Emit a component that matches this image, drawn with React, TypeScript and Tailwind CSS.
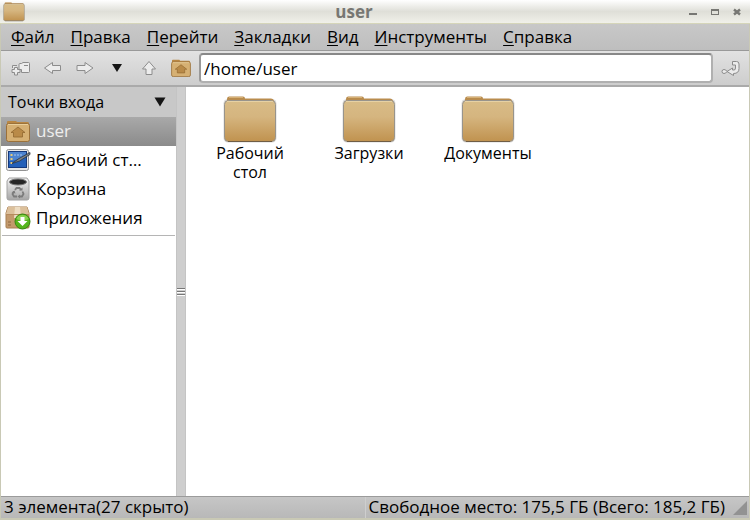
import { useState } from "react";

function Folder({ className }: { className: string }) {
  return (
    <svg viewBox="0 0 54 48" className={className} aria-hidden="true">
      <defs>
        <linearGradient id="folderFront" x1="0" y1="0" x2="0" y2="1">
          <stop offset="0" stopColor="#d8bc87" />
          <stop offset="0.4" stopColor="#d5b57f" />
          <stop offset="1" stopColor="#c0924f" />
        </linearGradient>
      </defs>
      <rect x="0.5" y="3" width="53" height="43.5" rx="4.5" fill="#888" opacity="0.3" />
      <path d="M4 7V3Q4 0.5 6 0.5H20Q22 0.5 22 2.5H48Q50 2.5 51 4.5V8H4Z" fill="#b98c4e" />
      <path d="M6 1.5H20" stroke="#d7b276" />
      <rect x="1.5" y="4.5" width="51" height="41" rx="4" fill="url(#folderFront)" stroke="#98948c" strokeWidth="1" />
      <path d="M4 5.5H50" stroke="#e6d1a4" />
      <path d="M5 45.5H49" stroke="#6f5d45" />
    </svg>
  );
}

function HomeFolder({ className }: { className: string }) {
  return (
    <svg viewBox="0 0 24 22" className={className} aria-hidden="true">
      <path d="M1 5V2Q1 1 2 1H10L11 2H22Q23 2 23 4V6H1Z" fill="#b98743" />
      <rect x="0.5" y="3.5" width="23" height="18" rx="2" fill="#d6b073" stroke="#9b713a" />
      <path d="M2 4.5H22" stroke="#e9cf9b" />
      <path d="M12 7L19 12.5H16.5V17H7.5V12.5H5Z" fill="#b98a48" stroke="#91672f" strokeWidth="0.8" />
    </svg>
  );
}

function DesktopIcon() {
  return (
    <svg viewBox="0 0 26 22" className="h-[22px] w-[26px] shrink-0" aria-hidden="true">
      <rect x="1.5" y="0.5" width="22" height="21" rx="2" fill="#e6e6e6" stroke="#929292" />
      <rect x="3.5" y="2.5" width="18" height="16" fill="#2460b8" stroke="#15397c" />
      <path d="M4 12Q13 12 21 5V3H4Z" fill="#4d84d0" />
      <path d="M5.5 5h2v2h-2zM5.5 9h2v2h-2zM5.5 13h2v2h-2z" fill="#e8c977" />
      <path d="M9 6H18" stroke="#a9c6ec" strokeDasharray="2 1" />
      <path d="M25 3.5L14 9.5L7 14.5L14.5 12L25 5.5Z" fill="#7c838a" stroke="#30363c" strokeWidth="0.8" />
    </svg>
  );
}

function TrashIcon() {
  return (
    <svg viewBox="0 0 26 24" className="h-6 w-[26px] shrink-0" aria-hidden="true">
      <defs>
        <linearGradient id="trashBody" x1="0" y1="0" x2="0" y2="1">
          <stop offset="0" stopColor="#f3f3f3" />
          <stop offset="1" stopColor="#a5a5a5" />
        </linearGradient>
      </defs>
      <path d="M4 1H22L24 4V21Q24 23 22 23H4Q2 23 2 21V4Z" fill="url(#trashBody)" stroke="#a2a2a2" />
      <ellipse cx="13" cy="5" rx="8.5" ry="3" fill="#262626" stroke="#777" />
      <g fill="none" stroke="#7b7b7b" strokeWidth="1.8">
        <path d="M10 13L11.5 11H14.5L16 13" />
        <path d="M17.5 14.5L18.5 17L17 19.5H14" />
        <path d="M12 19.5H9L7.5 17L9 14.5" />
      </g>
      <path d="M14 13.5H17.5V10.5ZM15 17.5V21.5L12.5 19.5ZM6.5 15.5L9.5 13.5L10.5 16.5Z" fill="#7b7b7b" />
    </svg>
  );
}

function PackageIcon() {
  return (
    <svg viewBox="0 0 26 24" className="h-6 w-[26px] shrink-0" aria-hidden="true">
      <path d="M3 1H22L24 7V21Q24 22 23 22H2Q1 22 1 21V7Z" fill="#c39a6c" stroke="#a77e51" />
      <path d="M3 1H22L24 8H1Z" fill="#dcc09b" />
      <path d="M10 1H15L16 12H9Z" fill="#eddcc2" />
      <path d="M2 8.5H23" stroke="#b58a5c" />
      <path d="M3 16H6M3 19H6" stroke="#8e693e" />
      <circle cx="17.5" cy="15.5" r="7.5" fill="#55b51c" stroke="#378510" />
      <path d="M11.5 13Q12.5 9 17.5 9Q22.5 9 23.5 13Q17.5 16 11.5 13Z" fill="#8bd351" />
      <path d="M15.5 11H19.5V15H22.5L17.5 20L12.5 15H15.5Z" fill="#fff" />
    </svg>
  );
}

function ToolIcon({ d }: { d: string }) {
  return (
    <svg viewBox="0 0 20 18" className="h-[18px] w-5" fill="#ececec" stroke="#8c8c8c" strokeWidth="1" strokeLinejoin="round" aria-hidden="true">
      <path d={d} />
    </svg>
  );
}

const menus = ["Файл", "Правка", "Перейти", "Закладки", "Вид", "Инструменты", "Справка"];

const tools = [
  { label: "Новая вкладка", d: "M8 8V5.5Q8 4.5 9 4.5H10.5L12 3.5H17.5Q18.5 3.5 18.5 4.5V12.5Q18.5 13.5 17.5 13.5H10.5V10.5H8ZM3.5 8.5H6.5V10.5H9V13.5H6.5V16H3.5V13.5H1V10.5H3.5ZM1.5 9V6.5H6M13 6.5H17" },
  { label: "Назад", d: "M1.5 9L9.5 3.5V6.5H17.5V11.5H9.5V14.5Z" },
  { label: "Вперёд", d: "M18 9L10 3.5V6.5H2V11.5H10V14.5Z" },
];

const files = ["Рабочий стол", "Загрузки", "Документы"];

export default function App() {
  const [path, setPath] = useState("/home/user");
  const places = [
    { label: "user", icon: <HomeFolder className="ml-px h-[22px] w-6 shrink-0" /> },
    { label: "Рабочий стол", icon: <DesktopIcon /> },
    { label: "Корзина", icon: <TrashIcon /> },
    { label: "Приложения", icon: <PackageIcon /> },
  ];

  return (
    <div className="flex h-screen flex-col bg-[#c8c8c8] font-['Open_Sans','Noto_Sans',sans-serif] text-[17px] leading-6 text-black">
      <header className="grid h-6 shrink-0 grid-cols-[1fr_auto_1fr] items-center border-b border-[#d5d5b9] bg-linear-to-b from-white via-[#dfdfd8] to-[#f0f0e9]">
        <Folder className="ml-[3px] h-5 w-[22px]" />
        <h1 className="pr-[42px] font-bold leading-5 text-[#777773]">user</h1>
        <div className="flex items-center justify-end gap-[6px] pr-[5px] text-[#777773]">
          <button aria-label="Свернуть" className="flex size-4 items-center justify-center">
            <svg viewBox="0 0 8 8" className="size-2"><path d="M0 5h8v2H0z" fill="currentColor" /></svg>
          </button>
          <button aria-label="Развернуть" className="flex size-4 items-center justify-center">
            <svg viewBox="0 0 8 8" className="size-2"><path d="M0 1H8V7H0ZM1 3V6H7V3Z" fill="currentColor" fillRule="evenodd" /></svg>
          </button>
          <button aria-label="Закрыть" className="flex size-4 items-center justify-center">
            <svg viewBox="0 0 8 8" className="size-2"><path d="M1 1.5L7 6.5M7 1.5L1 6.5" stroke="currentColor" strokeWidth="2.4" /></svg>
          </button>
        </div>
      </header>

      <div className="flex min-h-0 flex-1 flex-col border-x border-[#c9c9b5]">
        <nav className="flex h-[27px] shrink-0 items-center gap-4 border-b border-[#999] bg-linear-to-b from-[#c8c8c8] to-[#bebebe] px-[10px]">
          {menus.map((name) => (
            <button key={name}>
              <span className="underline underline-offset-2">{name[0]}</span>
              {name.slice(1)}
            </button>
          ))}
        </nav>

        <div className="flex h-9 shrink-0 items-center border-b-2 border-[#aaa] bg-linear-to-b from-[#e2e2e2] to-[#cdcdcd] pr-2 pl-[10px]">
          <div className="flex items-center gap-3">
            {tools.map((tool) => (
              <button key={tool.label} aria-label={tool.label}>
                <ToolIcon d={tool.d} />
              </button>
            ))}
            <button aria-label="История" className="flex w-5 justify-center">
              <svg viewBox="0 0 10 8" className="h-2 w-[10px]"><path d="M0 0H10L5 8Z" fill="#151515" /></svg>
            </button>
            <button aria-label="Вверх">
              <ToolIcon d="M10 2.5L16.5 10H13V15.5H7V10H3.5Z" />
            </button>
            <button aria-label="Домой" className="flex w-5 justify-center">
              <HomeFolder className="h-[18px] w-5" />
            </button>
          </div>
          <input
            aria-label="Адрес"
            value={path}
            onChange={(e) => setPath(e.target.value)}
            className="ml-2 h-[30px] min-w-0 flex-1 rounded-[4px] border-2 border-[#b0b0b0] border-t-[#888] border-l-[#999] bg-white px-[3px] outline-none"
          />
          <button aria-label="Перейти" className="ml-2">
            <ToolIcon d="M11.5 2.5H15.5Q18 2.5 18 5V9.5Q18 14.5 12.5 14.5V16.5L6 12.5L11.5 9V11H13Q14.5 11 14.5 9V6H11.5ZM1 12.5Q1 10.5 3 10.5Q5 10.5 6 12.5Q5 14.5 3 14.5Q1 14.5 1 12.5Z" />
          </button>
        </div>

        <main className="flex min-h-0 flex-1">
          <aside className="flex w-[175px] shrink-0 flex-col bg-white">
            <button className="flex h-[30px] shrink-0 items-center justify-between bg-[#c8c8c8] px-[7px] text-base">
              Точки входа
              <svg viewBox="0 0 12 10" className="mr-[3px] h-[10px] w-3" aria-hidden="true"><path d="M0.5 0.5H11.5L6 9.5Z" fill="#151515" /></svg>
            </button>
            <ul>
              {places.map((place, index) => (
                <li key={place.label}>
                  <button
                    className={
                      index === 0
                        ? "flex h-[29px] w-full items-center bg-linear-to-b from-[#a9a9a9] to-[#8b8b8b] pb-px pl-1 text-left text-[#eee]"
                        : "flex h-[29px] w-full items-center pb-px pl-1 text-left"
                    }
                  >
                    <span className="flex w-[31px] shrink-0">{place.icon}</span>
                    <span className="w-[108px] truncate">{place.label}</span>
                  </button>
                </li>
              ))}
            </ul>
            <hr className="mx-px mt-[2px] border-[#b5b5b5]" />
          </aside>

          <div className="flex w-[10px] shrink-0 flex-col items-center justify-center gap-px border-x border-[#c4c4c4] bg-[#cecece]">
            <span className="h-[2px] w-2 border-b border-white bg-[#777]" />
            <span className="h-[2px] w-2 border-b border-white bg-[#777]" />
            <span className="h-[2px] w-2 border-b border-white bg-[#777]" />
          </div>

          <section className="flex min-w-0 flex-1 flex-wrap content-start gap-[19px] bg-white pt-[9px] pl-[14px]">
            {files.map((name) => (
              <button key={name} className="flex w-[100px] flex-col items-center">
                <Folder className="h-12 w-[54px]" />
                <span className="w-24 text-center text-base leading-[19px]">{name}</span>
              </button>
            ))}
          </section>
        </main>

        <footer className="flex h-6 shrink-0 items-center border-t border-b-2 border-t-[#9b9b9b] border-b-[#c9c9b5] bg-linear-to-b from-[#c6c6c6] to-[#b8b8b8] pl-[3px] leading-5">
          <p className="flex-1 pb-px">3 элемента(27 скрыто)</p>
          <p className="border-l border-[#cecece] pb-px pl-[3px]">Свободное место: 175,5 ГБ (Всего: 185,2 ГБ)</p>
          <svg viewBox="0 0 16 16" className="mr-[1px] ml-[7px] size-4" aria-hidden="true">
            <path d="M15 1V15H1Z" fill="#929292" />
          </svg>
        </footer>
      </div>
    </div>
  );
}
